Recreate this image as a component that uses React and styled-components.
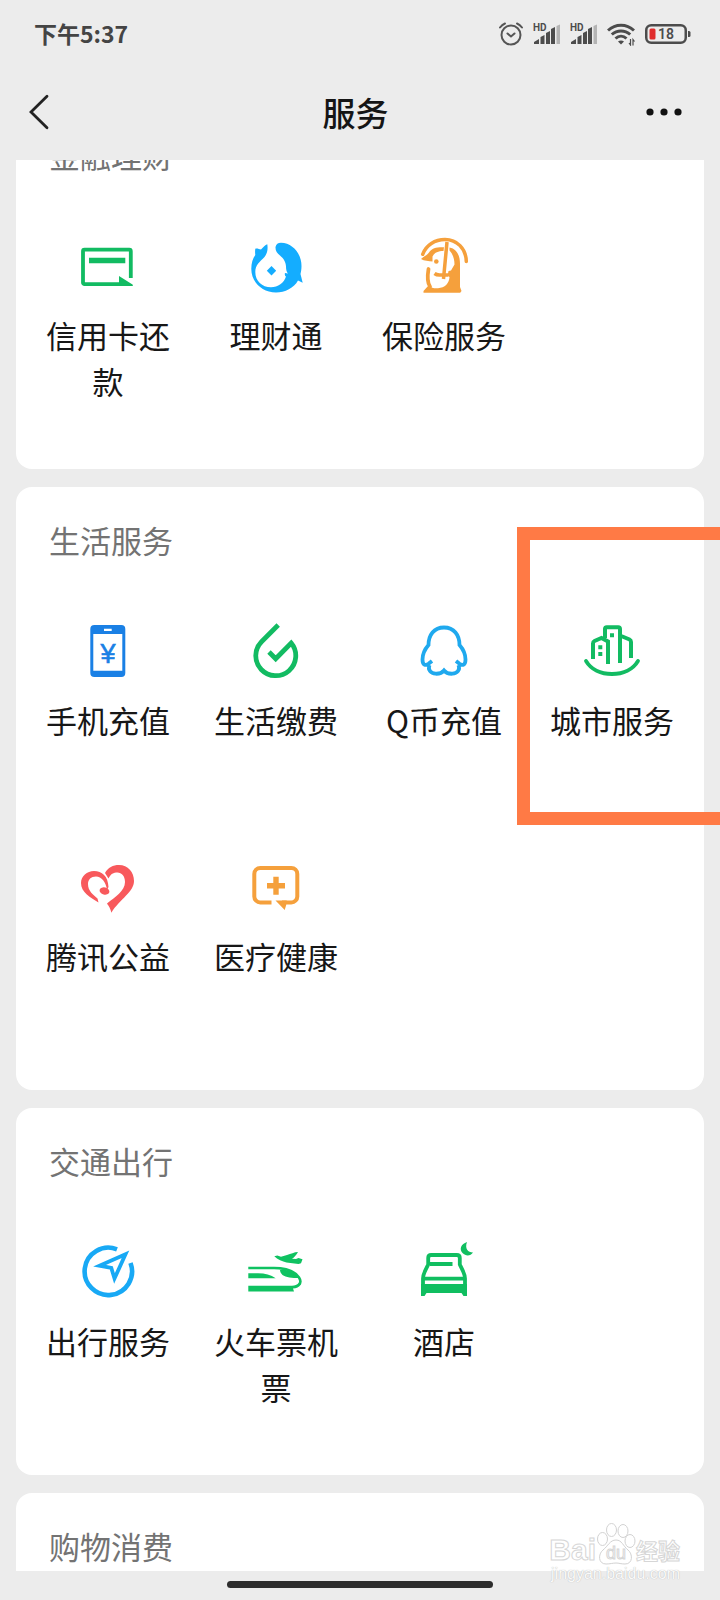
import { useLayoutEffect, useRef } from "react";
import styled, { createGlobalStyle } from "styled-components";

export default function App() {
  const lista = useRef(null);

  // the list opens a little scrolled, with the first title under the header
  useLayoutEffect(() => {
    lista.current.scrollTop = 58;
  }, []);

  return (
    <Page>
      <GlobalStyle />
      <StatusBar>
        <Clock>下午5:37</Clock>
        <StatusIcons>
          <AlarmIcon />
          <SignalIcon />
          <SignalIcon />
          <WifiIcon />
          <BatteryIcon />
        </StatusIcons>
      </StatusBar>

      <NavBar>
        <NavButton aria-label="返回">
          <svg width="20" height="36" viewBox="0 0 20 36" fill="none" stroke="#222" strokeWidth="2.8" strokeLinecap="round">
            <path d="M18 2.2L2 18l16 15.8" />
          </svg>
        </NavButton>
        <h1>服务</h1>
        <NavButton aria-label="更多" $end>
          <svg width="36" height="8" viewBox="0 0 36 8" fill="#111">
            <circle cx="4" cy="4" r="3.6" />
            <circle cx="18" cy="4" r="3.6" />
            <circle cx="32" cy="4" r="3.6" />
          </svg>
        </NavButton>
      </NavBar>

      <Feed ref={lista}>
        {sections.map((section) => (
          <Card key={section.title}>
            <h2>{section.title}</h2>
            <Grid>
              {section.items.map((item) => (
                <Service key={item.label}>
                  <svg width="64" height="64" viewBox="0 0 64 64" fill="none" color={item.color}>
                    {item.icon}
                  </svg>
                  <span>{item.label}</span>
                  {item.marked && <Mark />}
                </Service>
              ))}
            </Grid>
          </Card>
        ))}
      </Feed>

      <HomeBar>
        <div />
      </HomeBar>

      <Watermark>
        <Brand>
          <span>Bai</span>
          <Paw>
            <svg width="40" height="44" viewBox="0 0 40 44" fill="#fff" stroke="#d2d2d2" strokeWidth="1">
              <ellipse cx="6.500" cy="17" rx="5" ry="6.500" />
              <ellipse cx="15.500" cy="8" rx="5" ry="6.500" />
              <ellipse cx="27" cy="9" rx="5" ry="6.500" />
              <ellipse cx="34" cy="19" rx="5" ry="6.500" />
              <path d="M20 18c6 0 7 6 12 10 5 4 5 14-3 14-4 0-6-1-9-1s-6 1-10 1c-8 0-8-10-3-14 5-4 7-10 13-10z" />
            </svg>
            <em>du</em>
          </Paw>
          <b>经验</b>
        </Brand>
        <small>jingyan.baidu.com</small>
      </Watermark>
    </Page>
  );
}

function AlarmIcon() {
  return (
    <svg width="24" height="24" viewBox="0 0 24 24" fill="none" stroke="#555" strokeWidth="2" strokeLinecap="round">
      <circle cx="12" cy="13" r="9.5" />
      <path d="M8.500 11.500l3.500 3 3.500-3M1 5.500C2.500 3.500 4 2.300 6 1.500M23 5.500c-1.500-2-3-3.200-5-4" />
    </svg>
  );
}

function SignalIcon() {
  return (
    <svg width="27" height="22" viewBox="0 0 27 22" fill="#4c4c4c">
      <text x="0" y="8" fontSize="10" fontWeight="700" fontFamily="Roboto, sans-serif">HD</text>
      <path d="M1 21v-2l5-3v5zM7.500 21v-7l4-2v9zM13 21V10l4-2v13zM18 21V6l4-2v17z" />
      <path d="M23.500 21V3L27 1.500V21z" fill="#b4b4b4" />
    </svg>
  );
}

function WifiIcon() {
  return (
    <svg width="28" height="24" viewBox="0 0 28 24" fill="none" stroke="#4c4c4c" strokeWidth="3">
      <path d="M1 8.500C8.500 1.500 19.500 1.500 27 8.500M4.800 12.500c5.300-4.800 13.100-4.800 18.400 0M8.500 16.500c3.200-2.900 7.800-2.900 11 0" />
      <path d="M11 19.500c1.800-1.500 4.200-1.500 6 0l-3 3z" fill="#4c4c4c" stroke="none" />
      <path d="M23.500 17v6l-1.500-2M26 23.500v-6l1.500 2" strokeWidth="1.200" />
    </svg>
  );
}

function BatteryIcon() {
  return (
    <svg width="46" height="20" viewBox="0 0 46 20">
      <rect x="1.250" y="1.250" width="39.500" height="17.500" rx="5" fill="none" stroke="#4c4c4c" strokeWidth="2.500" />
      <rect x="4.500" y="4.500" width="6" height="11" rx="1.500" fill="#e02c2c" />
      <text x="13" y="15.200" fontSize="14" fontWeight="600" fill="#4c4c4c" fontFamily="Roboto, sans-serif">18</text>
      <path d="M43 7h1a1.500 1.500 0 0 1 1.500 1.500v3a1.500 1.500 0 0 1-1.500 1.500h-1z" fill="#4c4c4c" />
    </svg>
  );
}

const green = "#12bb62";
const blue = "#18a9f5";
const orange = "#f5a03c";

const sections = [
  {
    title: "金融理财",
    items: [
      {
        label: "信用卡还款",
        color: green,
        icon: (
          <>
            <path d="M54.800 45V18.200a1.500 1.500 0 0 0-1.500-1.500H8.500A1.500 1.500 0 0 0 7 18.200v31.500a1.500 1.500 0 0 0 1.500 1.500H45" stroke="currentColor" strokeWidth="3.800" />
            <path d="M43 43l13.500 8.500c.8.700.4 1.600-.5 1.600H43zM13 24.700h36.300v5.600H13z" fill="currentColor" />
          </>
        ),
      },
      {
        label: "理财通",
        color: "#14adff",
        icon: (
          <path
            transform="translate(0 1)"
            d="M11.300 14.700C13 14 15 15 17 15.500c2.500-2.500 4-4.300 6.300-5.200C24 15 23.500 19 20.500 23 16 27.500 11.300 31 11.300 38c0 9 6.700 15.300 15.700 15.300 7 0 13-4.300 15-10.800-1-.5-1.500-2-1-3.500l3 .5c-1.500-1.500-2-4.500-2-6.800 0-4.700-2.500-8.200-6-11.200-3-2.500-4.700-4.500-4.500-8.500.5-3 2.500-4.200 5.500-4.300C49 9 57.500 20 57.500 32c0 3-.5 6-1 8l2.200 8.700-4.700-2.200C50 54 41 58.500 32 58.500 18 58.500 7.300 48 7.300 35c0-6 1.500-10.500 4-14C11 19 11 16.500 11.300 14.700zM27.500 32l4.700 4.700-4.700 4.700-4.700-4.700z"
            fill="currentColor"
          />
        ),
      },
      {
        label: "保险服务",
        color: orange,
        icon: (
          <g transform="translate(0 1)">
            <path d="M10.700 20.300C14 11 23 5.500 33 5.500c12 0 21 9 21.300 22" stroke="currentColor" strokeWidth="3.500" strokeLinecap="round" />
            <path d="M35 8l-3.500 37M22.500 39.500q2 1.500 5 1.500h8.500" stroke="currentColor" strokeWidth="3.500" />
            <path d="M9 25c3-3 6-3.500 8-6.500 3-4.500 8-5.500 15-5.200l-.5 3.700c-5.500 0-9 1.500-11 5.500v5c-3.500-.5-8.500-.5-11.500-2.500z" fill="currentColor" />
            <circle cx="24.300" cy="27.500" r="2.300" fill="currentColor" />
            <path d="M16.500 35c-1.500 9-1 14 1.500 17.500" stroke="currentColor" strokeWidth="3.800" strokeLinecap="round" />
            <path d="M37.500 13.500c7.500 1.500 10.500 8 10.500 16.500v23l1.500 4-1.300 1.700H11.500V57l5-5.500c3 2.500 6 3 9.500 2.700 7-.5 11-4.500 11.500-11.200L35.500 42l1-5 2.500-.5 3.500-6c0-5-1.500-10.500-5-14z" fill="currentColor" />
          </g>
        ),
      },
    ],
  },
  {
    title: "生活服务",
    items: [
      {
        label: "手机充值",
        color: "#1a80e5",
        icon: (
          <>
            <rect x="14.300" y="7" width="35" height="52" rx="4" fill="currentColor" />
            <path d="M17.300 16h29v36.700h-29zM28 10.700h7.700V13H28z" fill="#fff" />
            <text x="32" y="44.500" textAnchor="middle" fontSize="27" fontFamily="Liberation Sans, sans-serif" fill="currentColor" stroke="currentColor" strokeWidth="0.6">¥</text>
          </>
        ),
      },
      {
        label: "生活缴费",
        color: green,
        icon: <path d="M34.200 7L17.500 23.700A20 20 0 1 0 47.200 25L31.700 40.800 25 34" stroke="currentColor" strokeWidth="4.800" />,
      },
      {
        label: "Q币充值",
        color: "#1fa9ee",
        icon: (
          <path
            d="M20 43l-3.500 2.800c-3 2.200-6 1.200-6-4.300 0-5 2.500-10.500 6-14.500C16.500 17 22 9.500 32 9.500S47.500 17 47.500 27c3.500 4 6 9.500 6 14.500 0 5.500-3 6.500-6 4.300L44 43M17.500 47c-2 5 1.500 8.500 6 8.700 3.500.2 6.500-.7 8.500-3.200 2 2.500 5 3.400 8.500 3.200 4.500-.2 8-3.700 6-8.700"
            stroke="currentColor"
            strokeWidth="3.800"
          />
        ),
      },
      {
        label: "城市服务",
        color: green,
        marked: true,
        icon: (
          <>
            <path d="M6 43c5 8.500 15 13 26 13s21-4.500 26-13" stroke="currentColor" strokeWidth="3.800" strokeLinecap="round" />
            <path d="M13 41V25.500c0-1.500.5-2 1.500-2.500l7-3 6.500 3.500V46M25 20V11q0-1.800 1.800-1.800h11.400q1.800 0 1.800 1.800v34M40 17.500l9.500 4c1 .5 1.500 1 1.500 2.500v16" stroke="currentColor" strokeWidth="4" />
            <path d="M30 15.300h4v4h-4zM18.300 27.300h4v4h-4zM18.300 34h4v4h-4z" fill="currentColor" />
          </>
        ),
      },
      {
        label: "腾讯公益",
        color: "#f8595c",
        icon: (
          <>
            <path d="M29 19C32 13.500 37 11 43 11c9 0 15 7 15 16 0 11-14 18-22.700 31.700C34.500 54 32.500 52 31 49.500 39 43 49 37 49 28c0-6-3.500-9.500-7.500-9.500S34.500 20 32.500 24.500z" fill="currentColor" />
            <path d="M22.500 48.500C14 43.500 5 38 5 29c0-7 6-12 13-12 8 0 14 5 14.500 16L31 36C30 28 25.500 22.500 20 22.500c-5 0-8 3-8 7.500 0 7 5 10.500 9.500 14.500z" fill="currentColor" />
            <ellipse cx="28.500" cy="37" rx="5" ry="3.600" transform="rotate(15 28.500 37)" fill="currentColor" />
          </>
        ),
      },
      {
        label: "医疗健康",
        color: orange,
        icon: (
          <>
            <path d="M27.500 48.400H16.300a6 6 0 0 1-6-6V20a6 6 0 0 1 6-6h31a6 6 0 0 1 6 6v22.400a6 6 0 0 1-6 6H38" stroke="currentColor" strokeWidth="4" />
            <path d="M31.500 46.500h11.200l-.5 4.500-1.500 5zM23 29h6.300v-6.300h5.400V29H41v5.400h-6.300v6.300h-5.400v-6.300H23z" fill="currentColor" />
          </>
        ),
      },
    ],
  },
  {
    title: "交通出行",
    items: [
      {
        label: "出行服务",
        color: blue,
        icon: (
          <>
            <path d="M41 10.300A23.700 23.700 0 1 0 54.500 24" stroke="currentColor" strokeWidth="4.600" />
            <path d="M23.500 26.700L49.500 15.300 38.500 39.500 35.300 29z" stroke="currentColor" strokeWidth="3.800" />
          </>
        ),
      },
      {
        label: "火车票机票",
        color: "#0fc261",
        icon: (
          <>
            <path d="M30.300 17.200l3-.7 3.700 1.200 6-1.700c4-1 7-3 11-3-1.500 3-3.500 5-6 6.800l4 .2 2.500-1 4 1.200-1.500 4-2.500.8-12-1.500c-4-1-9-3-12.200-6.300zM4.300 34.300H14c7 0 13 1.500 17.700 4.900H4.300zM4.300 46.700H48c3 0 5-1 6.500-2.500l2.500 1c-2 3-4.500 4.300-8 4.300l1 3H4.300zM36 31c8-1 14.500 2 19 8-7 0-13-.5-16.500-3-1.500-1.500-2.300-3-2.500-5z" fill="currentColor" />
            <path d="M4.300 29H30c12 0 21 3.500 25 9.500 2 3 1.500 5.500 0 7" stroke="currentColor" strokeWidth="2.600" />
          </>
        ),
      },
      {
        label: "酒店",
        color: "#10be60",
        icon: (
          <>
            <path d="M11 47v-7.500c0-5 3-9 5.200-14V19q0-3 3-3h25.600q3 0 3 3v6.500C50 30.500 53 34.500 53 39.500V47M11 39.700h42M18 25h22.500" stroke="currentColor" strokeWidth="3.800" />
            <path d="M9 45h46v12h-3.500l-2-3h-35l-2 3H9z" fill="currentColor" />
            <path d="M55 3c-6 2-8 7-4.500 11 3.500 3.500 8 3 10.500-.5-5 0-8.500-4-6-10.500z" fill="currentColor" />
          </>
        ),
      },
    ],
  },
  { title: "购物消费", items: [] },
];

const GlobalStyle = createGlobalStyle`
  * {
    box-sizing: border-box;
    margin: 0;
  }

  body {
    background: #ececec;
    font-family: "Noto Sans CJK SC", "Noto Sans", sans-serif;
  }
`;

const Page = styled.div`
  position: relative;
  display: flex;
  flex-direction: column;
  height: 100vh;
  overflow: hidden;
  background: #ececec;
`;

const StatusBar = styled.div`
  display: flex;
  align-items: center;
  justify-content: space-between;
  height: 64px;
  padding: 4px 29px 0 34px;
`;

const Clock = styled.time`
  font-size: 23px;
  font-weight: 700;
  line-height: 34px;
  padding-bottom: 2px;
  color: #444;
`;

const StatusIcons = styled.div`
  display: flex;
  align-items: center;
  gap: 10px;
`;

const NavBar = styled.header`
  display: flex;
  align-items: center;
  justify-content: space-between;
  height: 96px;
  padding: 0 38px 0 29px;

  h1 {
    font-size: 33px;
    font-weight: 500;
    color: #151515;
  }
`;

const NavButton = styled.button`
  display: flex;
  justify-content: ${(props) => (props.$end ? "flex-end" : "flex-start")};
  width: 48px;
  padding: 0;
  border: none;
  background: none;
  cursor: pointer;
`;

const Feed = styled.main`
  display: flex;
  flex: 1;
  flex-direction: column;
  gap: 18px;
  padding: 0 16px;
  min-height: 0;
  overflow-x: hidden;
  overflow-y: auto;
  scrollbar-width: none;
`;

const Card = styled.section`
  flex-shrink: 0;
  border-radius: 16px;
  background: #fff;

  h2 {
    padding: 30px 33px 55px;
    font-size: 31px;
    font-weight: 400;
    line-height: 46px;
    color: #737373;
  }
`;

const Grid = styled.div`
  display: grid;
  grid-template-columns: repeat(4, 1fr);
  grid-auto-rows: 236px;
  padding: 0 8px;
`;

const Service = styled.button`
  position: relative;
  display: flex;
  flex-direction: column;
  align-items: center;
  gap: 15px;
  padding: 0 20px;
  border: none;
  background: none;
  font-family: inherit;
  font-size: 31px;
  line-height: 46px;
  color: #171717;
  cursor: pointer;

  svg {
    flex-shrink: 0;
  }
`;

const Mark = styled.div`
  position: absolute;
  top: -91px;
  left: -11px;
  right: -24px;
  height: 298px;
  border: 13px solid #ff7a45;
  border-right: none;
  pointer-events: none;
`;

const HomeBar = styled.div`
  display: flex;
  justify-content: center;
  height: 29px;
  padding-top: 10px;

  div {
    width: 37%;
    height: 7px;
    border-radius: 4px;
    background: #2d2d2d;
  }
`;

const Watermark = styled.div`
  position: absolute;
  right: 40px;
  bottom: 18px;
  display: flex;
  flex-direction: column;
  align-items: flex-end;
  font-family: "Liberation Sans", "Noto Sans CJK SC", sans-serif;
  color: #fff;
  pointer-events: none;
  -webkit-text-stroke: 1px #d6d6d6;

  small {
    font-size: 16px;
    line-height: 16px;
    color: #fafafa;
    -webkit-text-stroke: 0;
    text-shadow: 0 0 1px #aaa;
  }
`;

const Brand = styled.div`
  display: flex;
  align-items: flex-end;
  height: 44px;

  span {
    font-size: 30px;
    font-weight: 700;
    line-height: 32px;
  }

  b {
    font-size: 22px;
    line-height: 28px;
  }
`;

const Paw = styled.div`
  position: relative;
  display: flex;

  em {
    position: absolute;
    inset: auto 0 4px;
    font-size: 18px;
    font-style: normal;
    line-height: 18px;
    text-align: center;
  }
`;
